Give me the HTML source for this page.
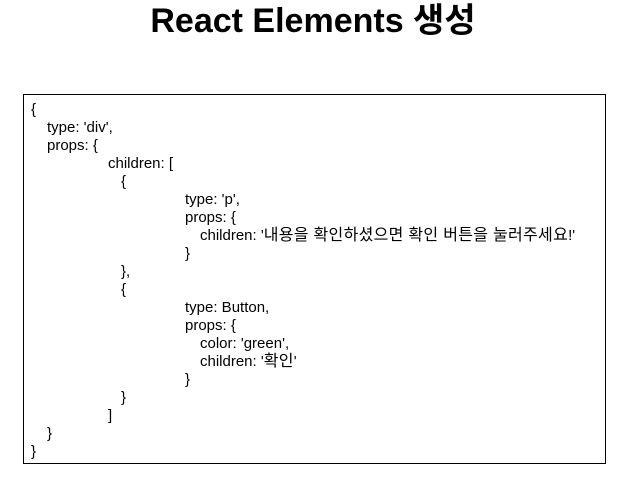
<!DOCTYPE html>
<html><head><meta charset="utf-8"><style>
html,body{margin:0;padding:0;background:#fff;width:642px;height:490px;overflow:hidden}
h1{position:absolute;left:0;width:626px;top:0;margin:0;text-align:center;font:bold 34px/42px "Liberation Sans","Noto Sans CJK KR",sans-serif;color:#000}
.box{position:absolute;left:23px;top:94px;width:581px;height:368px;border:1px solid #000}
.l{position:absolute;font:15px/18px "Liberation Sans","Noto Sans CJK KR",sans-serif;color:#000;white-space:pre}
.k{font-size:16px;letter-spacing:0.3px}
</style></head><body>
<h1>React Elements 생성</h1>
<div class="box"></div>
<div class="l" style="left:31px;top:101px">{</div>
<div class="l" style="left:47px;top:119px">type: 'div',</div>
<div class="l" style="left:47px;top:137px">props: {</div>
<div class="l" style="left:108px;top:155px">children: [</div>
<div class="l" style="left:121px;top:173px">{</div>
<div class="l" style="left:185px;top:191px">type: 'p',</div>
<div class="l" style="left:185px;top:209px">props: {</div>
<div class="l" style="left:200px;top:227px">children: '<span class="k">내용을 확인하셨으면 확인 버튼을 눌러주세요</span>!'</div>
<div class="l" style="left:185px;top:245px">}</div>
<div class="l" style="left:121px;top:263px">},</div>
<div class="l" style="left:121px;top:281px">{</div>
<div class="l" style="left:185px;top:299px">type: Button,</div>
<div class="l" style="left:185px;top:317px">props: {</div>
<div class="l" style="left:200px;top:335px">color: 'green',</div>
<div class="l" style="left:200px;top:353px">children: '<span class="k">확인</span>'</div>
<div class="l" style="left:185px;top:371px">}</div>
<div class="l" style="left:121px;top:389px">}</div>
<div class="l" style="left:108px;top:407px">]</div>
<div class="l" style="left:47px;top:425px">}</div>
<div class="l" style="left:31px;top:443px">}</div>
</body></html>
